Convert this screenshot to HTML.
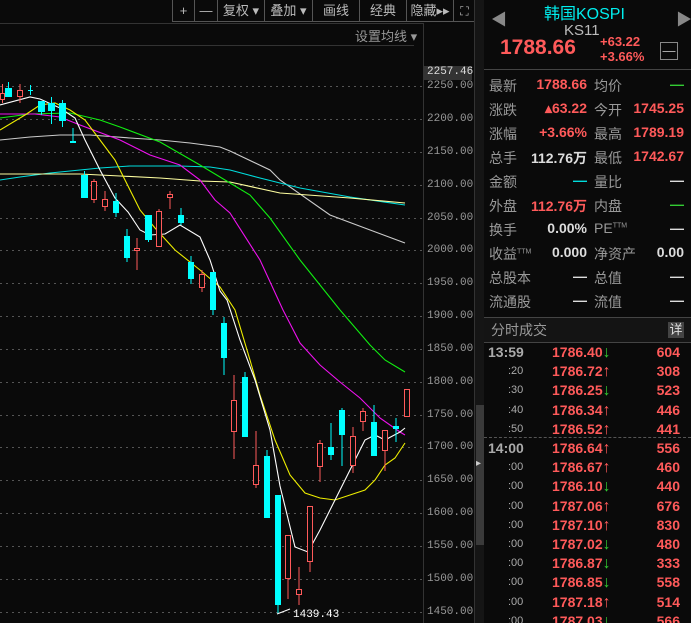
<!DOCTYPE html>
<html style="width:691px;height:623px;overflow:hidden"><head><meta charset="utf-8"><style>
*{margin:0;padding:0;box-sizing:border-box}
body{width:691px;height:623px;background:#0a0a0a;overflow:hidden;position:relative;font-family:"Liberation Sans","Noto Sans CJK SC",sans-serif;color:#bbb}
.a{position:absolute;white-space:nowrap}
.tb{position:absolute;top:0;height:22px;border:1px solid #555;border-top:none;font-size:13px;color:#bbb;text-align:center;line-height:22px}
.px{font-family:"Liberation Mono",monospace;font-size:11px;color:#999;position:absolute;left:427px}
.lbl{font-size:14px;color:#999;position:absolute}
.val{font-size:14px;font-weight:bold;position:absolute;text-align:right}
.r{color:#ff5a5a}.w{color:#ddd}.g{color:#3c3}
</style></head><body>
<div class="tb" style="left:172px;width:23px">+</div>
<div class="tb" style="left:194px;width:24px">—</div>
<div class="tb" style="left:217px;width:48px">复权 ▾</div>
<div class="tb" style="left:264px;width:49px">叠加 ▾</div>
<div class="tb" style="left:312px;width:48px">画线</div>
<div class="tb" style="left:359px;width:48px">经典</div>
<div class="tb" style="left:406px;width:48px">隐藏▸▸</div>
<div class="tb" style="left:453px;width:23px;font-size:12px">⛶</div>
<div class="a" style="left:0;top:23px;width:423px;height:1px;background:#333"></div>
<div class="a" style="left:355px;top:26px;font-size:13px;color:#999">设置均线 ▾</div>
<div class="a" style="left:0;top:45px;width:414px;height:1px;background:#333"></div>
<div class="a" style="left:423px;top:23px;width:1px;height:600px;background:#333"></div>
<div class="a" style="left:474px;top:0;width:10px;height:623px;background:#151515;border-left:1px solid #333"></div>
<div class="a" style="left:476px;top:405px;width:8px;height:140px;background:#3a3a3a"></div>
<div class="a" style="left:476px;top:458px;font-size:10px;color:#ccc">▸</div>
<svg class="a" style="left:0;top:0" width="424" height="623">
<g stroke="#555" stroke-dasharray="2,4" stroke-width="1">
<line x1="0" x2="423" y1="86.5" y2="86.5"/><line x1="0" x2="423" y1="119.5" y2="119.5"/><line x1="0" x2="423" y1="152.5" y2="152.5"/><line x1="0" x2="423" y1="185.5" y2="185.5"/><line x1="0" x2="423" y1="218.5" y2="218.5"/><line x1="0" x2="423" y1="250.5" y2="250.5"/><line x1="0" x2="423" y1="283.5" y2="283.5"/><line x1="0" x2="423" y1="316.5" y2="316.5"/><line x1="0" x2="423" y1="349.5" y2="349.5"/><line x1="0" x2="423" y1="382.5" y2="382.5"/><line x1="0" x2="423" y1="415.5" y2="415.5"/><line x1="0" x2="423" y1="447.5" y2="447.5"/><line x1="0" x2="423" y1="480.5" y2="480.5"/><line x1="0" x2="423" y1="513.5" y2="513.5"/><line x1="0" x2="423" y1="546.5" y2="546.5"/><line x1="0" x2="423" y1="579.5" y2="579.5"/><line x1="0" x2="423" y1="612.5" y2="612.5"/>
</g>
<g fill="none" stroke-width="1.1">
<polyline stroke="#ccc" points="0,140 30,137 60,135 90,135 130,138 160,140 190,143 220,147 230,151 270,170 280,180 330,215 405,243"/>
<polyline stroke="#0dd" points="0,180 20,177 50,173 80,170 100,168 130,166 180,166 210,167 230,170 260,178 300,188 350,197 405,205"/>
<polyline stroke="#ffffa0" points="0,174 80,174 120,176 160,178 200,181 230,182 280,193 350,198 405,203"/>
<polyline stroke="#1e1" points="0,118 30,114 70,113 100,120 120,127 160,142 200,165 230,183 250,195 270,218 300,260 340,310 370,345 385,360 405,372"/>
<polyline stroke="#e1e" points="0,114 35,114 60,117 80,125 120,140 150,155 180,165 200,180 215,200 230,213 260,260 283,310 300,343 320,365 340,382 360,398 380,418 400,432 405,435"/>
<polyline stroke="#ee0" points="0,130 25,115 40,105 55,103 70,110 85,120 100,140 115,160 130,190 140,210 155,228 175,250 200,270 220,287 235,310 250,360 260,395 275,440 290,475 305,493 320,498 335,500 350,495 365,490 375,480 385,465 395,458 405,443"/>
<polyline stroke="#fff" points="0,105 30,97 40,99 60,108 75,118 85,140 100,170 115,198 128,212 140,230 150,235 165,234 180,225 200,237 210,260 220,291 227,300 240,340 255,380 270,430 280,486 295,547 308,552 320,530 335,500 350,470 365,440 375,435 385,440 400,432 405,428"/>
</g>
<g id="c"></g>
<line x1="277" y1="614" x2="290" y2="609" stroke="#fff"/>
<text x="293" y="617" fill="#fff" font-family="Liberation Mono,monospace" font-size="11">1439.43</text>
</svg>
<div class="a" style="left:424px;top:66px;width:48px;height:14px;background:#333"></div>
<div class="px" style="top:66px;color:#ddd">2257.46</div>
<div class="px" style="top:80px">2250.00</div><div class="px" style="top:113px">2200.00</div><div class="px" style="top:146px">2150.00</div><div class="px" style="top:179px">2100.00</div><div class="px" style="top:212px">2050.00</div><div class="px" style="top:244px">2000.00</div><div class="px" style="top:277px">1950.00</div><div class="px" style="top:310px">1900.00</div><div class="px" style="top:343px">1850.00</div><div class="px" style="top:376px">1800.00</div><div class="px" style="top:409px">1750.00</div><div class="px" style="top:441px">1700.00</div><div class="px" style="top:474px">1650.00</div><div class="px" style="top:507px">1600.00</div><div class="px" style="top:540px">1550.00</div><div class="px" style="top:573px">1500.00</div><div class="px" style="top:606px">1450.00</div>
<div class="a" style="left:491px;top:6px;font-size:16px;color:#888">◀</div>
<div class="a" style="left:676px;top:6px;font-size:16px;color:#888">▶</div>
<div class="a" style="left:544px;top:0px;font-size:16px;color:#0ee">韩国KOSPI</div>
<div class="a" style="left:564px;top:22px;font-size:15px;color:#bbb">KS11</div>
<div class="a" style="left:500px;top:36px;font-size:21px;font-weight:bold;color:#ff5a5a">1788.66</div>
<div class="a" style="left:600px;top:34px;font-size:13px;font-weight:bold;color:#ff5a5a;line-height:15px">+63.22<br>+3.66%</div>
<div class="a" style="left:660px;top:42px;width:18px;height:18px;border:1px solid #888;color:#bbb;font-size:13px;text-align:center;line-height:15px">—</div>
<div class="a" style="left:484px;top:69px;width:207px;height:1px;background:#444"></div>
<div class="lbl" style="left:489px;top:76px">最新</div><div class="val r" style="left:520px;width:67px;top:76px">1788.66</div><div class="lbl" style="left:594px;top:76px">均价</div><div class="val g" style="left:620px;width:64px;top:76px">—</div>
<div class="lbl" style="left:489px;top:100px">涨跌</div><div class="val r" style="left:520px;width:67px;top:100px">▴63.22</div><div class="lbl" style="left:594px;top:100px">今开</div><div class="val r" style="left:620px;width:64px;top:100px">1745.25</div>
<div class="lbl" style="left:489px;top:124px">涨幅</div><div class="val r" style="left:520px;width:67px;top:124px">+3.66%</div><div class="lbl" style="left:594px;top:124px">最高</div><div class="val r" style="left:620px;width:64px;top:124px">1789.19</div>
<div class="lbl" style="left:489px;top:148px">总手</div><div class="val w" style="left:520px;width:67px;top:148px">112.76万</div><div class="lbl" style="left:594px;top:148px">最低</div><div class="val r" style="left:620px;width:64px;top:148px">1742.67</div>
<div class="lbl" style="left:489px;top:172px">金额</div><div class="val" style="left:520px;width:67px;top:172px;color:#0dd">—</div><div class="lbl" style="left:594px;top:172px">量比</div><div class="val w" style="left:620px;width:64px;top:172px">—</div>
<div class="lbl" style="left:489px;top:196px">外盘</div><div class="val r" style="left:520px;width:67px;top:196px">112.76万</div><div class="lbl" style="left:594px;top:196px">内盘</div><div class="val g" style="left:620px;width:64px;top:196px">—</div>
<div class="lbl" style="left:489px;top:220px">换手</div><div class="val w" style="left:520px;width:67px;top:220px">0.00%</div><div class="lbl" style="left:594px;top:220px">PE<sup style="font-size:7px">TTM</sup></div><div class="val w" style="left:620px;width:64px;top:220px">—</div>
<div class="lbl" style="left:489px;top:244px">收益<sup style="font-size:7px">TTM</sup></div><div class="val w" style="left:520px;width:67px;top:244px">0.000</div><div class="lbl" style="left:594px;top:244px">净资产</div><div class="val w" style="left:620px;width:64px;top:244px">0.00</div>
<div class="lbl" style="left:489px;top:268px">总股本</div><div class="val w" style="left:520px;width:67px;top:268px">—</div><div class="lbl" style="left:594px;top:268px">总值</div><div class="val w" style="left:620px;width:64px;top:268px">—</div>
<div class="lbl" style="left:489px;top:292px">流通股</div><div class="val w" style="left:520px;width:67px;top:292px">—</div><div class="lbl" style="left:594px;top:292px">流值</div><div class="val w" style="left:620px;width:64px;top:292px">—</div>
<div class="a" style="left:484px;top:317px;width:207px;height:1px;background:#444"></div>
<div class="a" style="left:484px;top:318px;width:207px;height:24px;background:#141414"></div>
<div class="a" style="left:491px;top:320px;font-size:14px;color:#999">分时成交</div>
<div class="a" style="left:668px;top:322px;width:16px;height:16px;background:#444;color:#ddd;font-size:13px;text-align:center;line-height:16px">详</div>
<div class="a" style="left:484px;top:342px;width:207px;height:1px;background:#444"></div>
<div class="a" style="left:484px;top:437px;width:207px;height:0;border-top:1px dashed #555"></div>
<div id="tr"></div>
<script>
var C=[[0,5,93,100,84,103,1],[5,7,88,97,82,97,0],[17,6,90,97,84,103,1],[28,5,90,91,85,95,0],[38,7,101,112,101,115,0],[48,7,103,111,97,124,0],[59,7,103,121,100,127,0],[70,6,141,143,128,143,0],[81,7,175,198,171,198,0],[91,6,181,200,179,203,1],[102,6,199,207,191,211,1],[113,6,201,213,193,217,0],[124,6,236,258,229,262,0],[134,6,248,251,238,270,1],[145,7,215,240,215,242,0],[156,6,211,247,209,247,1],[167,6,194,198,191,209,1],[178,6,215,223,208,225,0],[188,6,262,279,256,284,0],[199,6,274,288,270,292,1],[210,6,272,310,272,315,0],[221,6,323,358,317,375,0],[231,6,400,432,375,459,1],[242,6,377,437,372,437,0],[253,6,465,485,431,488,1],[264,6,456,518,450,518,0],[275,6,495,605,495,614,0],[285,6,535,579,535,599,1],[296,6,589,595,567,605,1],[307,6,506,562,506,572,1],[317,6,443,467,440,482,1],[328,6,447,455,423,460,0],[339,6,410,435,408,466,0],[350,6,436,466,427,473,1],[360,6,411,422,408,431,1],[371,6,422,456,405,456,0],[382,6,430,451,430,471,1],[393,6,426,429,418,442,0],[404,6,389,417,389,417,1]];
var s='';C.forEach(function(c){var x=c[0],w=c[1],col=c[6]?'#ff5a5a':'#0ff',m=x+w/2;
s+='<line x1="'+m+'" x2="'+m+'" y1="'+c[4]+'" y2="'+c[5]+'" stroke="'+col+'"/>';
if(c[6])s+='<rect x="'+(x+.5)+'" y="'+(c[2]+.5)+'" width="'+(w-1)+'" height="'+Math.max(1,c[3]-c[2]-1)+'" fill="#0a0a0a" stroke="'+col+'"/>';
else s+='<rect x="'+x+'" y="'+c[2]+'" width="'+w+'" height="'+Math.max(1,c[3]-c[2])+'" fill="'+col+'"/>';});
document.getElementById('c').innerHTML=s;
var T=[['13:59','1786.40',0,'604'],[':20','1786.72',1,'308'],[':30','1786.25',0,'523'],[':40','1786.34',1,'446'],[':50','1786.52',1,'441'],['14:00','1786.64',1,'556'],[':00','1786.67',1,'460'],[':00','1786.10',0,'440'],[':00','1787.06',1,'676'],[':00','1787.10',1,'830'],[':00','1787.02',0,'480'],[':00','1786.87',0,'333'],[':00','1786.85',0,'558'],[':00','1787.18',1,'514'],[':00','1787.03',0,'566']];
var h='';T.forEach(function(t,i){var y=(i<5?343+i*19.2:439+(i-5)*19.2);var big=t[0].length>3;
h+='<div class="a" style="top:'+y+'px;left:'+(big?488:508)+'px;font-size:'+(big?14:11)+'px;font-weight:'+(big?'bold':'normal')+';color:#aaa;line-height:19px">'+t[0]+'</div>';
h+='<div class="a r" style="top:'+y+'px;left:552px;font-size:14px;font-weight:bold;line-height:19px">'+t[1]+'<span style="font-size:16px;font-weight:bold;color:'+(t[2]?'#ff5a5a':'#3c3')+'">'+(t[2]?'↑':'↓')+'</span></div>';
h+='<div class="a r" style="top:'+y+'px;left:640px;width:40px;text-align:right;font-size:14px;font-weight:bold;line-height:19px">'+t[3]+'</div>';});
document.getElementById('tr').innerHTML=h;
</script>
</body></html>
